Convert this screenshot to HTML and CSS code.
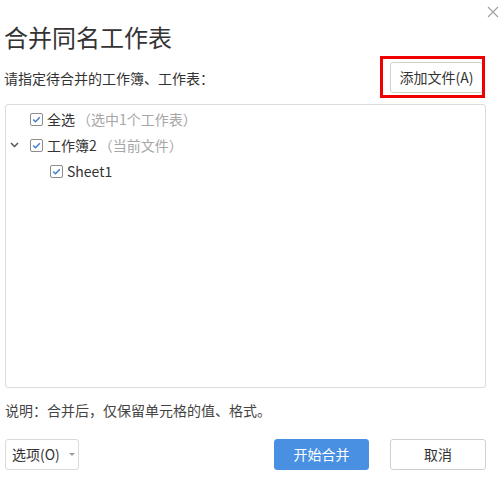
FILE: index.html
```html
<!DOCTYPE html>
<html>

<head>
    <meta charset="UTF-8">
    <title>合并同名工作表</title>
    <link rel="stylesheet" href="styles.css">
</head>

<body>
    <div class="dialog">
        <span class="close">
            <svg width="12" height="12" viewBox="0 0 12 12">
                <path d="M1 1 L11 11 M11 1 L1 11" stroke="#a0a0a0" stroke-width="1.1" fill="none"></path>
            </svg>
        </span>

        <p class="title">合并同名工作表</p>

        <div class="pick-row">
            <span class="hint">请指定待合并的工作簿、工作表：</span>
            <span class="add-wrap">
                <button class="btn add-btn">添加文件(A)</button>
                <span class="mark"></span>
            </span>
        </div>

        <div class="tree">
            <div class="node">
                <span class="toggle"></span>
                <span class="check"><svg width="13" height="13" viewBox="0 0 13 13"><path d="M3.2 6.6 L5.5 8.8 L9.8 4.2" stroke="#3d7ccc" stroke-width="1.4" fill="none"></path></svg></span>
                <span class="label">全选</span><span class="sub">（选中1个工作表）</span>
            </div>
            <div class="node">
                <span class="toggle">
                    <svg width="9" height="6" viewBox="0 0 9 6"><path d="M1 1 L4.5 4.5 L8 1" stroke="#555" stroke-width="1.5" fill="none"></path></svg>
                </span>
                <span class="check"><svg width="13" height="13" viewBox="0 0 13 13"><path d="M3.2 6.6 L5.5 8.8 L9.8 4.2" stroke="#3d7ccc" stroke-width="1.4" fill="none"></path></svg></span>
                <span class="label">工作簿2</span><span class="sub">（当前文件）</span>
            </div>
            <div class="node child">
                <span class="toggle"></span>
                <span class="check"><svg width="13" height="13" viewBox="0 0 13 13"><path d="M3.2 6.6 L5.5 8.8 L9.8 4.2" stroke="#3d7ccc" stroke-width="1.4" fill="none"></path></svg></span>
                <span class="label">Sheet1</span>
            </div>
        </div>

        <p class="note">说明：合并后，仅保留单元格的值、格式。</p>

        <div class="footer">
            <button class="btn options">选项(O)<span class="caret"></span></button>
            <div class="actions">
                <button class="btn primary">开始合并</button>
                <button class="btn cancel">取消</button>
            </div>
        </div>
    </div>
</body>

</html>
```

FILE: styles.css
```css
body {
    margin: 0;
    background-color: white;
    font-family: "Noto Sans CJK SC", "Noto Sans", sans-serif;
    color: #333;
}

.dialog {
    position: relative;
    width: 481px;
    height: 500px;
    padding: 0 14px 0 5px;
    display: flex;
    flex-direction: column;
}

.close {
    position: absolute;
    top: 6px;
    right: 1px;
    line-height: 0;
}

p {
    margin: 0;
}

.title {
    margin-top: 21px;
    font-size: 24px;
    line-height: 32px;
    margin-left: -1px;
}

.pick-row {
    margin-top: 9px;
    display: flex;
    align-items: center;
    justify-content: space-between;
}

.hint {
    font-size: 14px;
    line-height: 20px;
    margin-left: -1px;
}

.add-wrap {
    position: relative;
    margin-right: 3px;
}

.btn {
    font-family: "Noto Sans CJK SC", "Noto Sans", sans-serif;
    font-size: 14px;
    height: 31px;
    line-height: 29px;
    padding: 0;
    background-color: white;
    border: 1px solid #cfcfcf;
    border-radius: 3px;
    color: #333;
    cursor: pointer;
}

.add-btn {
    display: block;
    width: 93px;
}

.mark {
    position: absolute;
    top: -6px;
    left: -10px;
    right: -2px;
    bottom: -5px;
    border: 3px solid #f00000;
}

.tree {
    margin-top: 11px;
    height: 281px;
    border: 1px solid #dcdcdc;
    border-radius: 3px;
    padding-top: 1px;
    box-sizing: content-box;
}

.node {
    display: flex;
    align-items: center;
    height: 26px;
    padding-left: 4px;
    font-size: 14px;
}

.node.child {
    padding-left: 24px;
}

.toggle {
    width: 20px;
    display: flex;
    align-items: center;
    line-height: 0;
}

.check {
    width: 11px;
    height: 11px;
    border: 1px solid #8c8c8c;
    border-radius: 2px;
    margin-right: 4px;
    position: relative;
    line-height: 0;
}

.check svg {
    position: absolute;
    top: -1px;
    left: -1px;
}

.sub {
    color: #a6a6a6;
    margin-left: 2px;
}

.note {
    margin-top: 12px;
    font-size: 14px;
    line-height: 20px;
    color: #444;
}

.footer {
    margin-top: 19px;
    display: flex;
    align-items: center;
}

.options {
    width: 74px;
    text-align: left;
    padding-left: 6px;
    display: flex;
    align-items: center;
    border-color: #dadada;
}

.caret {
    margin-left: 9px;
    width: 0;
    height: 0;
    border-left: 3px solid transparent;
    border-right: 3px solid transparent;
    border-top: 3px solid #a0a0a0;
}

.actions {
    margin-left: auto;
    display: flex;
    gap: 21px;
}

.primary {
    width: 95px;
    background-color: #4a90e2;
    border-color: #4a90e2;
    color: white;
}

.cancel {
    width: 96px;
}
```
